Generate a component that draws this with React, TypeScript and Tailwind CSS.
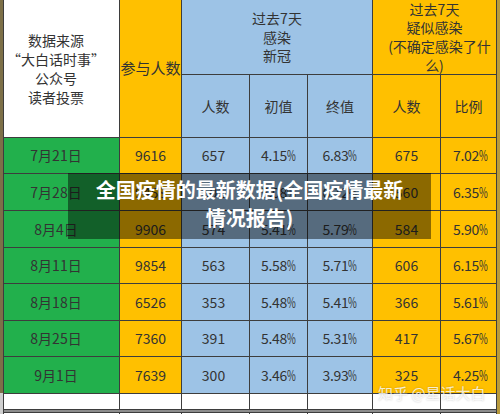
import React from "react";

const rows = [
  ["7月21日", "9616", "657", "4.15%", "6.83%", "675", "7.02%"],
  ["7月28日", "9458", "601", "5.08%", "6.12%", "560", "6.35%"],
  ["8月4日", "9906", "574", "5.41%", "5.79%", "584", "5.90%"],
  ["8月11日", "9854", "563", "5.58%", "5.71%", "606", "6.15%"],
  ["8月18日", "6526", "353", "5.48%", "5.41%", "366", "5.61%"],
  ["8月25日", "7360", "391", "5.48%", "5.31%", "417", "5.67%"],
  ["9月1日", "7639", "300", "3.46%", "3.93%", "325", "4.25%"],
];

const G = "bg-[#22b04c]";
const Y = "bg-[#ffc000]";
const B = "bg-[#9dc3e6]";

function Pct({ v }: { v: string }) {
  return (
    <span className="whitespace-nowrap tracking-[-0.3px]">
      {v.slice(0, -1)}
      <span className="inline-block scale-x-[0.68] origin-left -mr-[3.5px]">%</span>
    </span>
  );
}

export default function App() {
  const cell = "flex items-center justify-center text-[14px] text-[#333]";
  return (
    <div
      className="relative w-[500px] h-[414px] overflow-hidden bg-white flex"
      style={{ fontFamily: '"Noto Sans CJK SC", "Noto Sans", sans-serif' }}
    >
      <div className="w-[3px] flex flex-col shrink-0">
        <div className="h-[393px] bg-[#7d7048]" />
        <div className="flex-1 bg-[#cfcfcf]" />
      </div>
      <div className="grid grid-cols-[115px_61px_67px_57px_64px_67px_55px] grid-rows-[74px_62px_35px_36px_36px_35px_36px_35px_36px_15px_2px_2px] gap-px px-px bg-[#3d3d3d] shrink-0">
        <div className="row-span-2 bg-white flex flex-col items-center justify-center pr-[11px] text-[14px] leading-[19px] text-[#333]">
          <span>数据来源</span>
          <span>“大白话时事”</span>
          <span>公众号</span>
          <span>读者投票</span>
        </div>
        <div className={`row-span-2 ${Y} flex items-center justify-center text-[15px] whitespace-nowrap text-[#333]`}>
          参与人数
        </div>
        <div className={`col-span-3 ${B} flex flex-col items-center justify-center text-[14px] leading-[18.5px] text-[#333]`}>
          <span>过去7天</span>
          <span>感染</span>
          <span>新冠</span>
        </div>
        <div className={`col-span-2 ${Y} flex flex-col items-center justify-center text-[14px] leading-[18.7px] text-[#333] whitespace-nowrap`}>
          <span>过去7天</span>
          <span>疑似感染</span>
          <span className="pl-[10px]">(不确定感染了什</span>
          <span>么)</span>
        </div>
        <div className={`${B} ${cell}`}>人数</div>
        <div className={`${B} ${cell}`}>初值</div>
        <div className={`${B} ${cell}`}>终值</div>
        <div className={`${Y} ${cell}`}>人数</div>
        <div className={`${Y} ${cell}`}>比例</div>
        {rows.map((r) => (
          <React.Fragment key={r[0]}>
            <div className={`${G} ${cell} pr-[11px] text-[#1f3322]`}>{r[0]}</div>
            <div className={`${Y} ${cell}`}>{r[1]}</div>
            <div className={`${B} ${cell} pr-[4px]`}>{r[2]}</div>
            <div className={`${B} ${cell}`}><Pct v={r[3]} /></div>
            <div className={`${B} ${cell}`}><Pct v={r[4]} /></div>
            <div className={`${Y} ${cell}`}>{r[5]}</div>
            <div className={`${Y} ${cell} pl-[4px]`}><Pct v={r[6]} /></div>
          </React.Fragment>
        ))}
        {Array.from({ length: 7 }).map((_, i) => (
          <div key={"w" + i} className="bg-white" />
        ))}
        <div className="col-span-7 bg-[#8c8c8c]" />
        {Array.from({ length: 7 }).map((_, i) => (
          <div key={"b" + i} className="bg-white" />
        ))}
      </div>
      <div className="flex-1 bg-[#b89a3c]" />

      <div className="absolute left-[68px] top-[173px] w-[363px] h-[66px] bg-black/45 pt-[3px] flex flex-col items-center">
        <span className="text-white font-bold text-[20px] leading-[28px] whitespace-nowrap">
          全国疫情的最新数据(全国疫情最新
        </span>
        <span className="text-white font-bold text-[20px] leading-[28px] whitespace-nowrap">
          情况报告)
        </span>
      </div>

      <div className="absolute left-[378px] top-[383px] text-[15px] leading-[20px] text-white/80 whitespace-nowrap [text-shadow:0_0_2px_rgba(0,0,0,0.25)]">
        知乎 @星话大白
      </div>
    </div>
  );
}
